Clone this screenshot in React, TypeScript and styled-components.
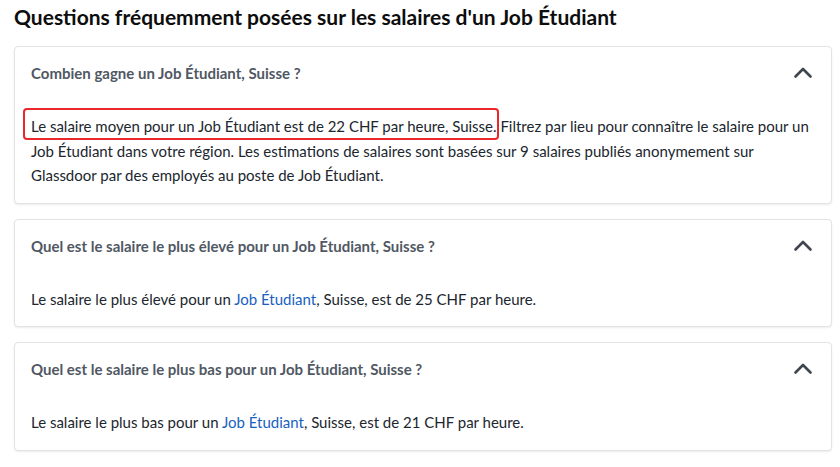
import styled, { createGlobalStyle } from 'styled-components'

const GlobalStyle = createGlobalStyle`
  body {
    margin: 0;
    background: #fff;
    font-family: Lato, "Liberation Sans", sans-serif;
  }
`

const Page = styled.div`
  padding: 3px 8px 0 14px;
  width: 818px;
`

const Title = styled.h2`
  font-size: 21px;
  line-height: 28px;
  font-weight: 700;
  color: #0d0d0d;
  margin: 0 0 15px;
`

const Card = styled.div`
  background: #fff;
  border: 1px solid #e3e3e3;
  border-radius: 4px;
  box-shadow: 0 1px 2px rgba(0, 0, 0, 0.08);
  padding: 15px 16px 15px 16px;
  margin-bottom: 15px;
`

const Header = styled.div`
  display: flex;
  align-items: center;
  justify-content: space-between;
  height: 22px;
`

const Question = styled.h3`
  margin: 0;
  font-size: 15px;
  font-weight: 700;
  color: #505863;
`

const Chevron = styled.svg`
  width: 20px;
  height: 20px;
  margin-right: 2px;
`

const Answer = styled.p`
  margin: 30px 0 0;
  font-size: 15px;
  line-height: 24.5px;
  color: #20262e;
`

const Link = styled.a`
  color: #1861bf;
  text-decoration: none;
`

const Highlight = styled.span`
  border: 2px solid #e8282b;
  border-radius: 4px;
  padding: 7px 0 3px 6px;
  margin: 0 -2px 0 -8px;
`

const ChevronUp = () => (
  <Chevron viewBox="0 0 20 20" fill="none">
    <path d="M2.5 13.5 L10 6 L17.5 13.5" stroke="#3f4650" strokeWidth="2.6" strokeLinecap="round" strokeLinejoin="round" />
  </Chevron>
)

const Faq = ({ question, children }: { question: string; children: React.ReactNode }) => (
  <Card>
    <Header>
      <Question>{question}</Question>
      <ChevronUp />
    </Header>
    <Answer>{children}</Answer>
  </Card>
)

export default function App() {
  return (
    <Page>
      <GlobalStyle />
      <Title>Questions fréquemment posées sur les salaires d'un Job Étudiant</Title>
      <Faq question="Combien gagne un Job Étudiant, Suisse ?">
        <Highlight>Le salaire moyen pour un Job Étudiant est de 22 CHF par heure, Suisse.</Highlight> Filtrez par lieu
        pour connaître le salaire pour un Job Étudiant dans votre région. Les estimations de salaires sont basées sur 9
        salaires publiés anonymement sur Glassdoor par des employés au poste de Job Étudiant.
      </Faq>
      <Faq question="Quel est le salaire le plus élevé pour un Job Étudiant, Suisse ?">
        Le salaire le plus élevé pour un <Link href="#">Job Étudiant</Link>, Suisse, est de 25 CHF par heure.
      </Faq>
      <Faq question="Quel est le salaire le plus bas pour un Job Étudiant, Suisse ?">
        Le salaire le plus bas pour un <Link href="#">Job Étudiant</Link>, Suisse, est de 21 CHF par heure.
      </Faq>
    </Page>
  )
}
